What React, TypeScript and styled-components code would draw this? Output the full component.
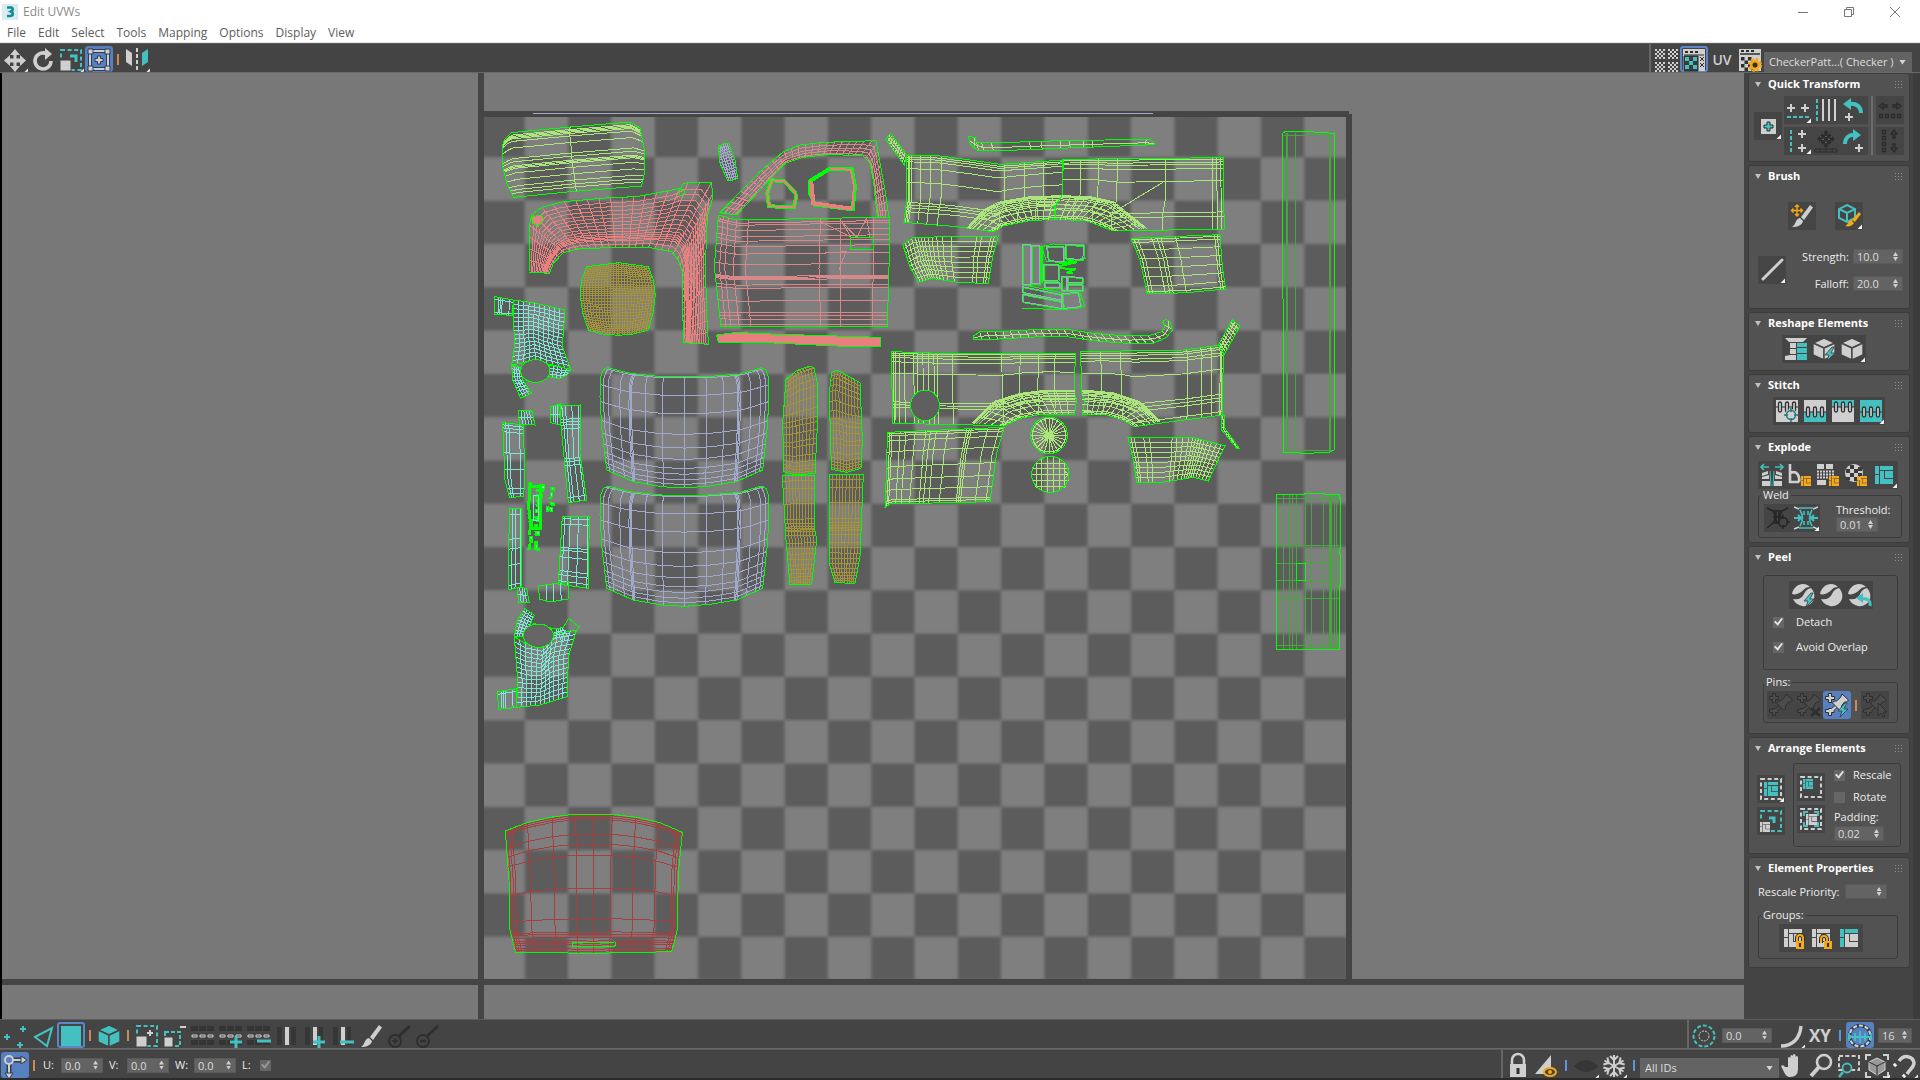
import React, { useId } from 'react';
import styled, { createGlobalStyle, css } from 'styled-components';

const W = '#cfcfcf';
const T = '#45c0c0';
const O = '#f6a915';
const K = '#2e2e2e';
const LIME = '#00ff00';

const Global = createGlobalStyle`
  *, *::before, *::after { box-sizing: border-box; }
  body { margin: 0; background: #444; }
  button, input, select { font: inherit; color: inherit; }
`;

/* ---------- shell ---------- */

const Shell = styled.div`
  display: flex;
  flex-direction: column;
  height: 100vh;
  min-width: 1100px;
  overflow: hidden;
  background: #444;
  color: #ececec;
  font: 11px/14px 'Open Sans', 'Noto Sans', sans-serif;
  border-bottom: 2px solid #2b2b2b;
`;
const TitleBar = styled.header`
  display: flex;
  align-items: center;
  gap: 5px;
  height: 23px;
  padding: 0 2px;
  background: #fff;
  color: #8a8a8a;
  font-size: 12px;
`;
const Title = styled.h1`
  flex: 1;
  margin: 0;
  font: inherit;
`;
const WindowButtons = styled.div`
  display: flex;
`;
const WindowButton = styled.button`
  width: 46px;
  height: 20px;
  padding: 0;
  border: 0;
  background: none;
  svg { display: block; margin: auto; }
`;
const MenuBar = styled.nav`
  display: flex;
  gap: 12px;
  height: 20px;
  padding: 0 7px;
  background: #fff;
  border-bottom: 1px solid #e4e4e4;
  color: #5c5c5c;
  font-size: 12px;
`;
const MenuItem = styled.button`
  padding: 0;
  border: 0;
  background: none;
  line-height: 19px;
`;
const ToolButton = styled.button<{ $plate?: boolean; $on?: boolean; $outline?: boolean }>`
  flex: none;
  width: 28px;
  height: 28px;
  padding: 0;
  border: 0;
  border-radius: ${p => (p.$plate && !p.$on ? 0 : 3)}px;
  background: ${p => (p.$on ? '#5680bf' : p.$plate ? '#454545' : 'none')};
  ${p => p.$outline && css`box-shadow: inset 0 0 0 2px #5b87c9;`}
  overflow: hidden;
  svg { display: block; }
`;
const Bar = styled.div<{ $last?: boolean }>`
  display: flex;
  align-items: stretch;
  justify-content: space-between;
  flex: none;
  height: ${p => (p.$last ? 29 : 30)}px;
  padding-top: 2px;
  border-top: 1px solid #5c5c5c;
  border-bottom: ${p => (p.$last ? 0 : 1)}px solid #686868;
  ${ToolButton} { height: 26px; }
`;
const BarGroup = styled.div<{ $edge?: boolean; $end?: number }>`
  display: flex;
  align-items: center;
  margin-top: -2px;
  padding: 2px ${p => p.$end ?? 0}px 0 1px;
  ${p => p.$edge && css`border-left: 2px solid #666;`}
`;
const Workspace = styled.main`
  display: flex;
  flex: 1;
  min-height: 0;
`;
const Viewport = styled.div`
  flex: 1;
  min-width: 0;
  background: #787878;
  border-left: 2px solid #000;
  svg { display: block; width: 100%; height: 100%; }
`;
const SidePanel = styled.aside`
  display: flex;
  flex-direction: column;
  gap: 3px;
  width: 176px;
  padding: 0 3px 0 4px;
  border-right: 7px solid #3c3c3c;
  overflow: hidden;
`;

/* ---------- controls ---------- */

const Sep = styled.span<{ $blue?: boolean }>`
  flex: none;
  width: 2px;
  height: 11px;
  margin: 0 ${p => (p.$blue ? 5 : 4)}px;
  background: ${p => (p.$blue ? '#5f94d8' : '#c98a55')};
`;
const SpinBox = styled.span<{ $w: number }>`
  display: flex;
  flex: none;
  width: ${p => p.$w}px;
  height: 15px;
  background: #636363;
  border: 1px solid #5a5a5a;
  color: #dcdcdc;
  input {
    flex: 1;
    min-width: 0;
    padding: 0 0 0 3px;
    border: 0;
    outline: 0;
    background: none;
    line-height: 13px;
  }
`;
const Steps = styled.span`
  display: flex;
  flex-direction: column;
  justify-content: center;
  gap: 1px;
  width: 9px;
`;
const Step = styled.button<{ $down?: boolean }>`
  width: 5px;
  height: 4px;
  padding: 0;
  border: 0;
  background: #d0d0d0;
  clip-path: ${p => (p.$down ? 'polygon(0 0, 100% 0, 50% 100%)' : 'polygon(50% 0, 100% 100%, 0 100%)')};
`;
const Check = styled.input`
  appearance: none;
  flex: none;
  width: 11px;
  height: 11px;
  margin: 0;
  background: #666;
  &:checked::before {
    content: '';
    display: block;
    width: 9px;
    height: 9px;
    margin: 1px;
    background: #e6e6e6;
    clip-path: polygon(0 50%, 18% 35%, 38% 60%, 82% 5%, 100% 15%, 42% 92%);
  }
  &:disabled::before { background: #999; }
`;
const SelectBox = styled.span<{ $w: number }>`
  display: grid;
  width: ${p => p.$w}px;
  height: 20px;
  align-self: flex-end;
  background: #636363;
  color: #dedede;
  select, &::after { grid-area: 1 / 1; }
  select {
    appearance: none;
    width: 100%;
    padding: 0 5px;
    border: 0;
    background: none;
    option { color: #000; }
  }
  &::after {
    content: '';
    place-self: center end;
    width: 7px;
    height: 5px;
    margin-right: 6px;
    background: #d4d4d4;
    clip-path: polygon(0 0, 100% 0, 50% 100%);
    pointer-events: none;
  }
`;
const BarField = styled.span`
  display: flex;
  align-items: center;
  gap: 6px;
  margin-right: 6px;
  label { min-width: 12px; white-space: nowrap; }
`;
const BarSpin = styled(BarField)`
  margin-left: 4px;
`;

/* ---------- rollouts ---------- */

const Card = styled.section`
  background: #525252;
  border: 1px solid #3d3d3d;
  border-radius: 3px;
`;
const CardHead = styled.button`
  display: flex;
  align-items: center;
  width: 100%;
  height: 22px;
  padding: 0 7px 2px 6px;
  border: 0;
  background: none;
  color: #fff;
  font-weight: 700;
  text-align: left;
  white-space: nowrap;
  span { flex: 1; padding-left: 7px; }
`;
const Rows = styled.div<{ $p: string; $gap?: number }>`
  display: flex;
  flex-direction: column;
  gap: ${p => p.$gap ?? 0}px;
  padding: ${p => p.$p};
`;
const Row = styled.div<{ $gap?: number; $center?: boolean }>`
  display: flex;
  align-items: center;
  gap: ${p => p.$gap ?? 0}px;
  ${p => p.$center && css`justify-content: center;`}
`;
const Divider = styled.span`
  align-self: stretch;
  width: 2px;
  margin: 0 1px;
  background: #6a6a6a;
`;
const FrameBox = styled.div<{ $p: string }>`
  flex: 1;
  padding: ${p => p.$p};
  border: 1px solid #3b3b3b;
  border-radius: 3px;
`;
const Group = styled.fieldset<{ $p: string }>`
  display: block;
  min-width: 0;
  margin: 0;
  padding: ${p => p.$p};
  border: 1px solid #3b3b3b;
  border-radius: 3px;
  legend { padding: 0 2px; line-height: 12px; margin-left: -3px; }
`;
const CheckRow = styled.div<{ $h: number; $gap: number }>`
  display: flex;
  align-items: center;
  gap: ${p => p.$gap}px;
  height: ${p => p.$h}px;
  white-space: nowrap;
`;
const Stack = styled.div<{ $gap: number; $grow?: boolean; $right?: boolean }>`
  display: flex;
  flex: ${p => (p.$grow ? '1' : 'none')};
  flex-direction: column;
  gap: ${p => p.$gap}px;
  ${p => p.$right && css`align-items: flex-end;`}
`;

/* ---------- icon art, drawn on a 28px grid ---------- */

const plus = (x: number, y: number, c = W, r = 4, w = 2) => (
  <path d={`M${x - r} ${y}h${2 * r}M${x} ${y - r}v${2 * r}`} stroke={c} strokeWidth={w} fill="none" />
);
const brush = (c = W) => (
  <g fill={c}><path d="M13 15L22 3l3 2.500L16 18z" /><path d="M12 16l3 3c-1 4-5 6-11 6 4-2 3-8 8-9z" /></g>
);
const dashBox = (c: string) => <rect x="4" y="4" width="20" height="20" fill="none" stroke={c} strokeWidth="2" strokeDasharray="4 2.600" />;
const layout = (x: number, y: number, s: number, c: string, c2 = c) => (
  <g transform={`translate(${x} ${y}) scale(${s / 18})`}>
    <path d="M0 0h4v8H0zM0 9h4v9H0zM5 0h13v4H5z" fill={c2} />
    <path d="M5 5h4v8h9v5H5zM10 5h8v7h-8z" fill={c} />
  </g>
);
const pins = (c: string) => (
  <g stroke={K} fill={c} strokeWidth="1">
    <path d="M5.500 2.500h3v3h3v3h-3v3h-3v-3h-3v-3h3z" />
    <path d="M5.500 17.500h3l7-6 1.500 2-6 6v2h-2.500v3h-3v-3h-3v-3h3z" />
    <path d="M19 3l6.500 6-2 2h-2l-3 4v3l-2 1-7-7 1.500-2h2.500l4-3.500z" />
  </g>
);
const sphere = (
  <g fill={W}><path d="M3 13C4 7 9 3 14 3c3 0 5 1 7 3-5 0-6 3-9 5s-6 3-9 2z" /><path d="M22 7c3 3 4 7 3 11-2 5-7 8-12 7-4-1-7-3-9-7 6 1 9-1 11-5s4-5 7-6z" /></g>
);
const bolt = <path d="M22 12l-7 8h4l-2 6 8-8h-4l3-6z" fill={T} stroke="#3a3a3a" strokeWidth=".8" />;
const cube = (c: string, e: string) => (
  <g fill={c} stroke={e} strokeWidth="1.400"><path d="M14 3l11 5-11 5L3 8z" /><path d="M3 8l11 5v12L3 20z" /><path d="M25 8l-11 5v12l11-5z" /></g>
);
const checks = (x: number, y: number, n: number, s: number, c: string) => (
  <path fill={c} d={Array.from({ length: n * n }, (_, i) => i).filter(i => ((i % n) + Math.floor(i / n)) % 2 === 0)
    .map(i => `M${x + (i % n) * s} ${y + Math.floor(i / n) * s}h${s}v${s}h${-s}z`).join('')} />
);
const loopRow = (c: string, y: number) => (
  <g><path fill="#343434" d="M2 4h7v5H2zM10 4h7v5h-7zM18 4h7v5h-7zM2 18h7v5H2zM10 18h7v5h-7zM18 18h7v5h-7z" />
    <path d={`M3 ${y}h5v2H3zM11 ${y}h5v2h-5zM19 ${y}h5v2h-5z`} fill="none" stroke={c} /></g>
);
const stitch = (top: string, bottom: string, y: number) => (
  <g><path d={`M3 3h22v${y - 3}H3z`} fill={top} /><path d={`M3 ${y}h22v${25 - y}H3z`} fill={bottom} />
    <path d={`M3 ${y}h22`} stroke={K} />
    {[6, 13, 20].map(x => <rect key={x} x={x - 0.5} y={y - 5} width="3" height="10" rx="1.500" fill={W} stroke={K} strokeWidth="1.300" />)}</g>
);
const miniTarget = (x: number, y: number, c: string) => (
  <g stroke={c} fill="none" strokeWidth="1.500"><circle cx={x} cy={y} r="4.500" /><path d={`M${x - 7} ${y}h4M${x + 3} ${y}h4M${x} ${y - 7}v4M${x} ${y + 3}v4`} /></g>
);
const lock = (x: number, y: number, open = false) => (
  <g><path d={open ? `M${x - 3} ${y + 2}v-4a3 3 0 0 1 6 0v3` : `M${x + 1} ${y}v-3a3 3 0 0 1 6 0v3`} fill="none" stroke={K} strokeWidth="4" />
    <path d={open ? `M${x - 3} ${y + 2}v-4a3 3 0 0 1 6 0v3` : `M${x + 1} ${y}v-3a3 3 0 0 1 6 0v3`} fill="none" stroke={O} strokeWidth="2" />
    <rect x={x} y={y} width="8" height="8" fill={O} /><path d={`M${x + 4} ${y + 2}v4`} stroke={K} strokeWidth="2" /></g>
);

const art: Record<string, React.ReactNode> = {
  move: <path fill={W} d="M14 3l5 6h-3.500v3.500H19V9l6 5.500-6 5.500v-3.500h-3.500V20H19l-5 6-5-6h3.500v-3.500H9V20l-6-5.500L9 9v3.500h3.500V9H9z" />,
  rotate: <g><path d="M18 8a8 8 0 1 0 4 7" fill="none" stroke={W} strokeWidth="3.600" /><path d="M16 2l7 6-7 6z" fill={W} /></g>,
  scale: <g>{dashBox(T)}<path d="M13 10h6v6" fill="none" stroke={T} strokeWidth="3" /><path d="M3 14h11v11H3z" fill={W} stroke="#444" /></g>,
  freeform: <g fill="none" stroke="#2e3b50"><path d="M5 5h18v18H5z" strokeWidth="4" /><path d="M5 5h18v18H5z" stroke={W} strokeWidth="2" />
    <g fill={W}><path d="M3 3h5v5H3zM20 3h5v5h-5zM3 20h5v5H3zM20 20h5v5h-5z" /></g><path d="M12.500 10h3v2.500H18v3h-2.500V18h-3v-2.500H10v-3h2.500z" fill={W} /></g>,
  mirror: <g><path d="M3 3l6 4v13l-6-4z" fill={W} /><path d="M14 2v24" stroke={W} strokeWidth="2" strokeDasharray="4 2" /><path d="M25 3l-6 4v13l6-4z" fill={T} /></g>,
  tiles: <g>{checks(3, 3, 5, 2, W)}{checks(16, 3, 5, 2, W)}{checks(3, 16, 5, 2, W)}{checks(16, 16, 5, 2, W)}</g>,
  checkWin: <g><path d="M3 3h22v22H3z" fill={W} /><path d="M4 9h20M4 25V10h14v15z" stroke={K} fill="#3b3b3b" /><path d="M5 5h3v2H5zM10 5h3v2h-3zM15 5h3v2h-3z" fill={K} />{checks(5, 11, 3, 4, T)}<path d="M20 11l4 4M24 11l-4 4M20 17l4 4M24 17l-4 4" stroke={K} /></g>,
  gearWin: <g><path d="M3 3h22v22H3z" fill={W} /><path d="M4 8h20" stroke={K} strokeWidth="1.500" /><path d="M5 4h3v2H5zM10 4h3v2h-3zM15 4h3v2h-3z" fill={K} />{checks(5, 11, 4, 3.5, K)}
    <circle cx="19" cy="19" r="5" fill={O} /><circle cx="19" cy="19" r="5.500" fill="none" stroke={O} strokeWidth="3" strokeDasharray="2.600 1.700" /><circle cx="19" cy="19" r="2.500" fill={K} /></g>,
  pivot: <g><path d="M7 7h15v15H7z" fill={W} /><path d="M13 10h3v3h3v3h-3v3h-3v-3h-3v-3h3z" fill={T} stroke={K} /></g>,
  alignH: <g>{plus(7, 12)}{plus(21, 12)}<path d="M3 21h22" stroke={T} strokeWidth="2" strokeDasharray="4 2" /></g>,
  lines: <g><path d="M5 3v23" stroke={T} strokeWidth="2" strokeDasharray="4 2" /><path d="M11 3v22M17 3v22M23 3v22" stroke={W} strokeWidth="2" /></g>,
  ccw: <g><path d="M9 8c8-1 12 3 12 9" fill="none" stroke={T} strokeWidth="4" /><path d="M11 2v12L3 8z" fill={T} />{plus(9, 21)}</g>,
  cw: <g><path d="M5 17c0-6 4-10 10-9" fill="none" stroke={T} strokeWidth="4" /><path d="M13 2v12l8-6z" fill={T} />{plus(19, 21)}</g>,
  alignV: <g>{plus(18, 7)}{plus(18, 21)}<path d="M7 3v22" stroke={T} strokeWidth="2" strokeDasharray="4 2" /></g>,
  diamond: <g><path d="M14 3l9 9-9 9-9-9z" fill="#2d2d2d" /><path d="M11 6l9 9M8 9l9 9M17 6l-9 9M20 9l-9 9" stroke="#606060" strokeDasharray="2 2" /><path d="M3 22h22v3H3zM8 22v3M14 22v3M20 22v3" fill="none" stroke="#2d2d2d" /></g>,
  spaceH: <g fill="none" stroke="#2b2b2b" strokeWidth="1.300"><path d="M3 10l4-3v2h4v2H7v2zM25 10l-4-3v2h-4v2h4v2z" /><path d="M3.500 18.500h3v3h-3zM9.500 18.500h3v3h-3zM15.500 18.500h3v3h-3zM21.500 18.500h3v3h-3z" /></g>,
  spaceV: <g fill="none" stroke="#2b2b2b" strokeWidth="1.300"><path d="M18 3l3 4h-2v4h-2V7h-2zM18 25l3-4h-2v-4h-2v4h-2z" /><path d="M6.500 3.500h3v3h-3zM6.500 9.500h3v3h-3zM6.500 15.500h3v3h-3zM6.500 21.500h3v3h-3z" /></g>,
  brushMove: <g>{brush()}<path d="M9 3v11M3.500 8.500h11M7 5l2-2 2 2M7 12l2 2 2-2M5.500 6.500l-2 2 2 2M12.500 6.500l2 2-2 2" fill="none" stroke={O} strokeWidth="1.400" /></g>,
  brushCube: <g><path d="M12 3l8 4v9l-8 4-8-4V7zM4 7l8 4 8-4M12 11v9" fill="none" stroke={T} strokeWidth="2" /><path d="M24 10l2 2-6 8-3-2zM16 18l3 3c-2 3-5 4-9 3 3-1 3-5 6-6z" fill={O} /></g>,
  falloff: <path d="M5 23L24 4" stroke={W} strokeWidth="3" strokeLinecap="round" />,
  straighten: <g fill={W}><path d="M3 3h11v4H7zM8 8h6v5H8zM8 14h6v5H8zM3 25v-4l5-1h6v5z" /><path d="M14 3h11l-4 4h-7z" /><path d="M15 8h10v4H15zM15 13h10v5H15zM15 19h10v6H15z" fill={T} /></g>,
  cubeBolt: <g>{cube(W, '#454545')}{bolt}</g>,
  cube: cube(W, '#454545'),
  stitch1: <g>{stitch(W, W, 10)}<circle cx="18" cy="18" r="6" fill={W} />{miniTarget(18, 18, '#227a80')}</g>,
  stitch2: stitch(W, T, 15),
  stitch3: stitch(T, W, 10),
  stitch4: stitch(T, T, 15),
  breakIt: <g><path d="M3 6h8M17 6h8M6 3L3 6l3 3M22 3l3 3-3 3" stroke={T} strokeWidth="1.600" fill="none" /><path d="M4 12l6-2v3l-6 2zM4 16l7-2v4H4zM4 20h8v5H4zM24 12l-6-2v3l6 2zM24 16l-7-2v4h7zM24 20h-8v5h8z" fill={W} /><path d="M12 10l1 15M16 10l-1 15" stroke={T} /></g>,
  angle: <g><path d="M4 3v18h9M4 12c7-3 10 3 9 9" fill="none" stroke={W} strokeWidth="2.600" />{layout(15, 15, 10, O)}</g>,
  smooth: <g><path d="M3 3h7v5H3zM12 3h7v5h-7zM3 19h9v5H3z" fill={W} /><path d="M3 10.500h18M3 13.500h18M3 16.500h18" stroke={W} strokeWidth="2" strokeDasharray="2 1" />{layout(15, 15, 10, O)}</g>,
  ball: <g><circle cx="12" cy="12" r="9" fill={W} /><path d="M8 4h4v4H8zM16 6h4v4h-4zM4 8h4v4H4zM12 8h4v4h-4zM8 12h4v4H8zM16 12h4v4h-4zM4 16h4v3H4zM12 16h4v4h-4z" fill="#3a3a3a" />{layout(15, 15, 10, O)}</g>,
  element: layout(5, 5, 18, T),
  weldTarget: <g stroke="#252525" fill="none" strokeWidth="1.500"><path d="M3 4l6 3h9l6-3M3 24l6-5h6M9 7c3 4 3 8 0 12M18 7c-2 3-2 5-1 7M12 7v12M15 7v12M9 13h8" />{miniTarget(19, 18, '#252525')}</g>,
  weld: <g fill="none" strokeWidth="1.600"><path d="M7 4h14M8 6c3 5 3 11 0 16M20 6c-3 5-3 11 0 16M7 24h14M12 7v4M16 7v4M12 17v4M16 17v4" stroke={T} /><path d="M2 3l5 2M26 3l-5 2M2 25l5-2M26 25l-5-2" stroke={W} /><path d="M2 14h6M26 14h-6M6 11l3 3-3 3M22 11l-3 3 3 3" stroke={T} strokeWidth="2" /></g>,
  peelBolt: <g>{sphere}{bolt}</g>,
  peel: sphere,
  peelBack: <g>{sphere}<path d="M25 25c1-6-3-8-9-7" fill="none" stroke={T} strokeWidth="3" /><path d="M18 12v10l-7-5z" fill={T} /></g>,
  pin: pins('#4c4c4c'),
  unpin: <g>{pins('#4c4c4c')}<path d="M16 17l9 8M25 17l-9 8" stroke={K} strokeWidth="2.600" /></g>,
  autopin: <g>{pins(W)}{bolt}</g>,
  selectPin: <g>{pins('#4c4c4c')}<path d="M17 12v13l3-3 2 4 2-1-2-4h4z" fill="#4c4c4c" stroke={K} /></g>,
  pack: <g>{dashBox(W)}{layout(7, 7, 14, T)}</g>,
  packTogether: <g>{dashBox(W)}{layout(6, 6, 10, T)}</g>,
  rescale: <g>{dashBox(T)}<path d="M12 11h5v5" fill="none" stroke={T} strokeWidth="3" /><path d="M2 14h12v12H2z" fill="#454545" />{layout(3, 15, 10, W)}</g>,
  packFull: <g>{dashBox(W)}<path d="M7 11V7h4M17 7h4v4M21 17v4h-4M11 21H7v-4" fill="none" stroke={T} strokeWidth="2" />{layout(9, 9, 11, W)}</g>,
  groupLock: <g>{layout(5, 5, 18, W)}{lock(17, 17)}</g>,
  groupUnlock: <g>{layout(5, 5, 18, W)}{lock(17, 17, true)}</g>,
  groupSelect: layout(5, 5, 18, W, T),
  vertex: <g>{plus(22, 7, T, 3)}{plus(6, 15, T, 3)}{plus(19, 23, T, 3)}</g>,
  edge: <path d="M6 15L23 6l-5 18z" fill="none" stroke={T} strokeWidth="2" />,
  polygon: <path d="M4 4h20v20H4z" fill={T} />,
  cubeTeal: cube(T, '#444'),
  grow: <g>{dashBox(T)}{plus(17, 11, W, 3)}<path d="M3 14h11v11H3z" fill={W} stroke="#444" /></g>,
  shrink: <g><path d="M4 10h15v14H4z" fill="none" stroke={T} strokeWidth="2" strokeDasharray="4 2" /><path d="M19 5h6" stroke={W} strokeWidth="2" /><path d="M3 15h9v10H3z" fill={W} stroke="#444" /></g>,
  loop: loopRow(W, 13),
  loopPlus: <g>{loopRow(W, 13)}{plus(19, 20, T, 6, 3)}</g>,
  loopMinus: <g>{loopRow(W, 13)}<path d="M12 19h14" stroke={T} strokeWidth="3" /></g>,
  ring: <g><path d="M4 5h5v18H4zM18 5h5v18h-5z" fill="#363636" /><path d="M12 5h4v18h-4z" fill={W} /></g>,
  ringPlus: <g><path d="M4 5h5v18H4zM18 5h4v18h-4z" fill="#363636" /><path d="M12 5h4v18h-4z" fill={W} />{plus(18, 20, T, 6, 3)}</g>,
  ringMinus: <g><path d="M4 5h5v18H4zM18 5h4v18h-4z" fill="#363636" /><path d="M12 5h4v18h-4z" fill={W} /><path d="M11 20h14" stroke={T} strokeWidth="3" /></g>,
  brush: brush(),
  brushPlus: <g><circle cx="10" cy="19" r="6" fill="none" stroke={K} strokeWidth="2" />{plus(10, 19, K, 3, 1.5)}<path d="M14 14L25 4" stroke={K} strokeWidth="3" /></g>,
  brushMinus: <g><circle cx="10" cy="19" r="6" fill="none" stroke={K} strokeWidth="2" /><path d="M7 19h6M14 14L25 4" stroke={K} strokeWidth="2.500" /></g>,
  absolute: <g fill="none" stroke="#303d50"><path d="M8 12v12M12 8h12" strokeWidth="5" /><path d="M8 12v12M12 8h10" stroke={W} strokeWidth="2" /><path d="M20 4l6 4-6 4zM4 21l4 6 4-6z" fill={W} /><circle cx="8" cy="8" r="4" stroke={W} strokeWidth="2" /></g>,
  target: <g fill="none"><circle cx="14" cy="14" r="10.500" stroke={T} strokeWidth="2" strokeDasharray="4 2" /><circle cx="14" cy="14" r="5" stroke={W} strokeDasharray="2 1" /></g>,
  curve: <path d="M3 24C15 24 22 16 23 4" fill="none" stroke={W} strokeWidth="3.400" />,
  snapGrid: <g fill="none"><circle cx="14" cy="14" r="10.500" stroke="#2e3b50" strokeWidth="3.500" /><circle cx="14" cy="14" r="10.500" stroke={W} strokeWidth="2.200" strokeDasharray="4 2" /><path d="M2 15h24M3 11v8M9 11v8M14 9v12M19 11v8M25 11v8" stroke={T} strokeWidth="1.800" /></g>,
  lock: <g><path d="M8 14V8a6 6 0 0 1 12 0v6" fill="none" stroke={W} strokeWidth="2.600" /><path d="M6 12h16v13H6z" fill={W} /><path d="M14 16v6" stroke={K} strokeWidth="3" /></g>,
  showSel: <g><path d="M19 3v13l-7 6H3z" fill={W} /><ellipse cx="18" cy="20" rx="6" ry="4" fill="#444" stroke={O} strokeWidth="2" /><circle cx="18" cy="20" r="2" fill={O} /></g>,
  eye: <path d="M2 14q12-12 24 0-12 12-24 0z" fill="#363636" />,
  snow: <g stroke={W} strokeWidth="2" fill="none">{[0, 60, 120].map(a => <path key={a} transform={`rotate(${a} 14 14)`} d="M14 3v22M10 4l4 4 4-4M10 24l4-4 4 4" />)}</g>,
  hand: <path d="M9 15V6q1-2 2.500 0v6V4q1.200-2 2.500 0v8-9q1.200-2 2.500 0v9-7q1.300-2 2.500 0v12q0 8-8 8-4 0-6-5l-3-6q2-2 4 1z" fill={W} />,
  zoom: <g fill="none" stroke={W}><circle cx="17" cy="10" r="7" strokeWidth="2.600" /><path d="M12 15l-8 9" strokeWidth="4" /></g>,
  zoomArea: <g fill="none"><path d="M4 4h20v14H4z" stroke={W} strokeWidth="2" strokeDasharray="4 2.300" /><circle cx="12" cy="16" r="4.500" stroke={T} strokeWidth="1.800" fill="#444" /><path d="M8 20l-4 5" stroke={T} strokeWidth="2.600" /></g>,
  extents: <g><path d="M3 8V3h5M20 3h5v5M25 20v5h-5M8 25H3v-5" fill="none" stroke={W} strokeWidth="2" /><path d="M14 6l8 4v8l-8 5-8-5v-8z" fill="#999" stroke={W} /><path d="M6 10l8 4 8-4M14 14v9" fill="none" stroke={K} /></g>,
  magnet: <g fill="none" stroke={W} strokeWidth="3.500"><path d="M8 9c5-7 14-5 15 2 0 4-3 5-7 11" /><path d="M3 14l2-2M12 25l2-2" stroke="#eee" /></g>,
};

function Icon({ name, fly }: { name: string; fly?: boolean }) {
  return (
    <svg width="28" height="28" viewBox="0 0 28 28" aria-hidden="true">
      {art[name]}
      {fly && <path d="M27 22.500v4.500h-4.500z" fill="#f2f2f2" />}
    </svg>
  );
}
type ToolProps = { icon: string; fly?: boolean; plate?: boolean; on?: boolean; outline?: boolean };
function Tool({ icon, fly, plate, on, outline }: ToolProps) {
  return (
    <ToolButton type="button" aria-label={icon} $plate={plate} $on={on} $outline={outline}>
      <Icon name={icon} fly={fly} />
    </ToolButton>
  );
}
const Tools = ({ of, fly = [], plate }: { of: string[]; fly?: string[]; plate?: boolean }) => (
  <>{of.map(n => <Tool key={n} icon={n} fly={fly.includes(n)} plate={plate} />)}</>
);

function Spin({ id, value, w, label }: { id?: string; value: string; w: number; label?: string }) {
  return (
    <SpinBox $w={w}>
      <input id={id} type="text" defaultValue={value} aria-label={label} />
      <Steps>
        <Step type="button" aria-label="Increase" />
        <Step type="button" aria-label="Decrease" $down />
      </Steps>
    </SpinBox>
  );
}
function Labeled({ text, value, w }: { text: string; value: string; w: number }) {
  const id = useId();
  return <><label htmlFor={id}>{text}</label><Spin id={id} value={value} w={w} /></>;
}
function Tick({ text, on, h, gap }: { text: string; on?: boolean; h: number; gap: number }) {
  const id = useId();
  return (
    <CheckRow $h={h} $gap={gap}>
      <Check id={id} type="checkbox" defaultChecked={on} />
      <label htmlFor={id}>{text}</label>
    </CheckRow>
  );
}
function Rollout({ title, children }: { title: string; children: React.ReactNode }) {
  return (
    <Card>
      <CardHead type="button" aria-expanded="true">
        <svg width="6" height="5" viewBox="0 0 6 5" aria-hidden="true"><path d="M0 0h6L3 5z" fill="#c0c0c0" /></svg>
        <span>{title}</span>
        <svg width="7" height="7" viewBox="0 0 7 7" aria-hidden="true"><path d="M.5 0v7M3.500 0v7M6.500 0v7" stroke="#8f8f8f" strokeDasharray="1 2" /></svg>
      </CardHead>
      {children}
    </Card>
  );
}

/* ---------- UV shells ---------- */

type Pt = [number, number];
const parse = (s: string): Pt[] => s.split(' ').map(p => p.split(',').map(Number) as Pt);
const at = (line: Pt[], t: number): Pt => {
  const seg = line.slice(1).map((p, i) => Math.hypot(p[0] - line[i][0], p[1] - line[i][1]));
  let d = t * seg.reduce((a, b) => a + b, 0);
  for (let i = 0; i < seg.length; i++) {
    if (d <= seg[i] || i === seg.length - 1) {
      const k = seg[i] ? Math.min(1, d / seg[i]) : 0;
      return [line[i][0] + (line[i + 1][0] - line[i][0]) * k, line[i][1] + (line[i + 1][1] - line[i][1]) * k];
    }
    d -= seg[i];
  }
  return line[0];
};
const even = (n: number, a = 0, b = 1) => Array.from({ length: n }, (_, i) => a + ((b - a) * (i + 1)) / (n + 1));
const toPath = (pts: Pt[], closed = false) => 'M' + pts.map(p => `${p[0].toFixed(1)} ${p[1].toFixed(1)}`).join('L') + (closed ? 'Z' : '');

type PatchProps = { t: string; b: string; l?: string; r?: string; u: number | number[]; v: number | number[]; c: string; bare?: boolean };
/* A patch is spanned between its four edges; u and v place the wire lines. */
function Patch({ t, b, l, r, u, v, c, bare }: PatchProps) {
  const top = parse(t), bot = parse(b);
  const left = l ? parse(l) : [top[0], bot[0]];
  const right = r ? parse(r) : [top[top.length - 1], bot[bot.length - 1]];
  const A = top[0], B = top[top.length - 1], C = bot[0], D = bot[bot.length - 1];
  const pos = (x: number, y: number): Pt => {
    const pt = at(top, x), pb = at(bot, x), pl = at(left, y), pr = at(right, y);
    return [0, 1].map(k => (1 - y) * pt[k] + y * pb[k] + (1 - x) * pl[k] + x * pr[k]
      - ((1 - x) * (1 - y) * A[k] + x * (1 - y) * B[k] + (1 - x) * y * C[k] + x * y * D[k])) as Pt;
  };
  const us = typeof u === 'number' ? even(u) : u;
  const vs = typeof v === 'number' ? even(v) : v;
  const steps = Array.from({ length: 25 }, (_, i) => i / 24);
  const wires = us.map(x => toPath(steps.map(y => pos(x, y)))).join('') + vs.map(y => toPath(steps.map(x => pos(x, y)))).join('');
  return (
    <>
      <path d={wires} stroke={c} />
      {!bare && <path d={toPath([...top, ...right, ...[...bot].reverse(), ...[...left].reverse()], true)} stroke={LIME} />}
    </>
  );
}
const Shape = ({ p, fill, c = LIME, w = 1, open }: { p: string; fill?: string; c?: string; w?: number; open?: boolean }) => (
  <path d={toPath(parse(p), !open)} fill={fill ?? 'none'} stroke={c} strokeWidth={w} />
);
const Sheet = ({ x, y, children }: { x: number; y: number; children: React.ReactNode }) => (
  <g transform={`translate(${x} ${y}) scale(${1 / 3})`}>{children}</g>
);
const Wires = styled.g`
  fill: none;
  shape-rendering: crispEdges;
  path, ellipse { vector-effect: non-scaling-stroke; }
`;

const PINK = '#e88080', DOOR = '#d88888', GREEN = '#aae67a', GOLD = '#a5933c', CYAN = '#80e6d4', BLUE = '#a0a9cb', RED = '#a83e3e', FOREST = '#44a83c';
const hoodU = [0.02, 0.05, 0.12, 0.175, 0.183, 0.19, 0.27, 0.37, 0.5, 0.63, 0.73, 0.81, 0.818, 0.826, 0.89, 0.95, 0.98];
const hoodV = [0.02, 0.19, 0.35, 0.53, 0.65, 0.75, 0.83, 0.88, 0.93, 0.97];
const archV = [0, 0.04, 0.08, 0.14, 0.22, 0.38, 0.6, 0.85, 0.93];
const stripV = [0.05, 0.12, 0.26, 0.4, 0.44, 0.47, 0.485, 0.5, 0.515, 0.55, 0.62, 0.67, 0.72, 0.77, 0.82, 0.86, 0.9, 0.93, 0.96, 0.98];
const upperStripV = [0.04, 0.08, 0.14, 0.2, 0.3, 0.4, 0.48, 0.53, 0.6, 0.68, 0.73, 0.82, 0.88, 0.92, 0.95, 0.98];

function Hood() {
  return <Patch c={BLUE} u={hoodU} v={hoodV} t="383,263 450,280 545,290 680,290 780,282 845,263" b="380,570 460,605 545,620 613,624 690,618 770,605 848,570"
    l="383,263 370,270 362,290 360,350 365,440 380,570" r="845,263 858,270 865,290 867,350 862,440 848,570" />;
}
const crumbs = Array.from({ length: 34 }, (_, i) => {
  const y = 608 + ((i * 37) % 200);
  const x = y < 690 ? 150 + ((i * 29) % 72) : 148 + ((i * 17) % 34);
  return `M${x} ${y}h${4 + (i % 4) * 3}v${4 + (i % 3) * 4}h-7z`;
}).join('');
const spokes = Array.from({ length: 24 }, (_, i) => {
  const a = (i * Math.PI) / 12;
  return `M567 1006L${(567 + 54 * Math.cos(a)).toFixed(1)} ${(1006 + 54 * Math.sin(a)).toFixed(1)}`;
}).join('');

function UVCanvas() {
  return (
    <svg viewBox="2 73 1742 946" preserveAspectRatio="xMidYMid slice" role="img" aria-label="UV layout">
      <defs>
        <pattern id="checker" x="481.500" y="114" width="86.600" height="86.600" patternUnits="userSpaceOnUse">
          <rect width="86.600" height="86.600" fill="#7f7f7f" />
          <path d="M0 0h43.300v43.300H0zM43.300 43.300h43.300v43.300H43.300z" fill="#5c5c5c" />
        </pattern>
        <filter id="soft" x="0" y="0" width="1" height="1"><feGaussianBlur stdDeviation="1.700" /></filter>
      </defs>
      <rect x="481" y="114" width="868" height="868" fill="url(#checker)" filter="url(#soft)" />
      <g fill="#454545" shapeRendering="crispEdges">
        <path d="M478 73h6v946h-6zM0 979h1744v6H0zM478 111h871v6H478zM1346 114h6v865h-6z" />
        <path d="M533 113h620v1H533z" fill="#a0a9cb" />
      </g>
      <Wires>
        <Sheet x={470} y={100}>
          <Patch c={GREEN} u={[0.49]} v={[0.04, 0.06, 0.08, 0.1, 0.14, 0.24, 0.4, 0.45, 0.51, 0.53, 0.55, 0.62, 0.72, 0.82, 0.88, 0.93]}
            t="103,120 124,98 300,81 482,66 510,84" r="510,84 523,150 524,215 515,258" b="131,292 300,275 515,258" l="103,120 97,140 99,205 112,255 131,292" />
          <Patch c={PINK} u={34} v={[0.1, 0.18, 0.26, 0.34, 0.41, 0.48, 0.55, 0.62, 0.68, 0.73, 0.77, 0.8, 0.83, 0.86, 0.93]}
            t="177,516 180,370 185,345 215,322 280,305 420,293 500,290 580,275 632,265 640,250 665,247 724,248 729,290 712,350 706,500 712,690 716,733"
            b="238,520 250,490 280,458 330,446 420,443 540,443 605,455 625,480 637,515 640,728" />
          <Shape p="185,350 215,345 222,360 205,378 187,370" fill={PINK} />
          <ellipse cx="635" cy="277" rx="8" ry="10" stroke={LIME} />
          <Patch c={DOOR} u={[0.03, 0.06, 0.11, 0.18, 0.6, 0.72, 0.91]} v={[0.03, 0.05, 0.1, 0.16, 0.2, 0.25, 0.32, 0.42, 0.53, 0.54, 0.55, 0.56, 0.61, 0.64, 0.76, 0.87, 0.9, 0.93, 0.98]}
            t="745,345 800,360 1222,352 1257,352" b="753,680 1252,680" l="745,345 733,500 753,680" r="1257,352 1257,500 1252,680" />
          <Patch c={DOOR} u={34} v={[0.25, 0.5, 0.7, 0.9]} t="750,338 870,215 940,155 990,135 1060,127 1218,122 1245,270 1257,352" b="800,345 870,270 945,190 1000,172 1080,163 1180,168 1200,190 1210,240 1222,352" />
          <Shape c={DOOR} open p="1050,365 1142,410 1115,365 1160,412 1190,355 1200,412" />
          <Shape c={DOOR} open p="1050,460 1128,455 1110,500 1110,680" />
          <Shape p="1142,412 1211,412 1211,449 1142,449" />
          <Shape p="905,241 942,243 975,277 979,290 972,321 897,319 892,280" c={LIME} w={4} />
          <Shape p="905,241 942,243 975,277 979,290 972,321 897,319 892,280" c={PINK} w={2} />
          <Shape p="1020,243 1080,206 1145,207 1155,260 1148,328 1035,314 1020,280" w={4} />
          <Shape p="1080,207 1143,209 1152,260 1147,325 1035,313 1022,280 1024,243" c={PINK} w={2} open />
          <Shape p="1024,245 1030,310 1145,326" c={PINK} w={4} open />
          <Shape p="740,705 800,697 870,701 1230,712 1232,738 1100,738 870,727 745,727" fill={PINK} />
          <Patch c={BLUE} u={5} v={12} t="745,140 760,132 776,130" b="772,240 785,241 803,236" r="776,130 795,180 803,236" l="745,140 750,190 772,240" />
          <Patch c={GOLD} u={24} v={[0.03, 0.06, 0.09, 0.12, 0.15, 0.18, 0.22, 0.26, 0.3, 0.33, 0.36, 0.39, 0.42, 0.45, 0.49, 0.53, 0.57, 0.61, 0.65, 0.69, 0.73, 0.77, 0.81, 0.85, 0.88, 0.91, 0.94, 0.97]}
            t="350,500 445,488 535,500" b="356,692 400,702 445,706 490,702 535,690" l="350,500 335,540 330,580 338,640 356,692" r="535,500 550,540 556,585 549,640 535,690" />
        </Sheet>
        <Sheet x={480} y={280}>
          <Patch c={CYAN} u={[0.2, 0.3, 0.4, 0.8]} v={[0.15, 0.9]} t="45,50 100,60" b="43,103 97,106" />
          <Patch c={CYAN} u={9} v={14} t="100,60 160,68 255,90" b="95,255 122,250 165,238 205,252 272,268" l="100,60 103,200 95,255" r="255,90 247,200 272,268" />
          <Patch c={CYAN} u={3} v={8} t="95,255 122,262" b="122,355 155,340" l="95,255 98,300 122,355" r="122,262 128,300 155,340" />
          <Patch c={CYAN} u={4} v={3} t="208,255 272,268" b="205,290 240,296 262,285" />
          <Patch c={CYAN} u={[0.15, 0.3, 0.8]} v={[0.03, 0.07, 0.12, 0.4, 0.62, 0.88, 0.95]} t="68,428 130,435" b="88,652 130,650" l="68,428 75,600 88,652" r="130,435 135,600 130,650" />
          <Patch c={CYAN} u={4} v={1} t="115,390 155,390" b="118,432 165,435" />
          <Patch c={CYAN} u={[0.15, 0.3, 0.6, 0.9]} v={[0.14, 0.17, 0.2, 0.24, 0.55, 0.58, 0.62, 0.95]} t="235,378 302,375" b="265,668 320,660" l="235,378 243,435 265,668" r="302,375 300,520 320,660" />
          <Patch c={CYAN} u={3} v={1} t="213,380 240,372" b="212,428 240,435" />
          <Patch c={CYAN} u={[0.25, 0.5, 0.9]} v={[0.08, 0.38, 0.5, 0.7, 0.95]} t="88,685 125,685" b="85,930 125,920" />
          <Patch c={CYAN} u={3} v={1} t="112,922 140,925" b="115,966 148,968" />
          <Patch c={CYAN} u={[0.1, 0.3, 0.6, 0.95]} v={[0.04, 0.12, 0.46, 0.5, 0.6, 0.8, 0.86, 0.95]} t="247,708 328,710" b="235,912 325,925" />
          <Patch c={CYAN} u={3} v={[]} t="176,918 265,905" b="178,957 210,966 265,957" />
          <Patch c={CYAN} u={[0.2, 0.3, 0.4, 0.8]} v={[0.15]} t="53,1235 110,1226" b="55,1288 110,1282" />
          <Patch c={CYAN} u={10} v={13} t="103,1070 135,1090 190,1102 225,1060 290,1050" b="110,1282 180,1275 262,1250" l="103,1070 113,1200 110,1282" r="290,1050 265,1130 262,1250" />
          <Patch c={CYAN} u={3} v={8} t="135,985 163,1005" b="103,1070 132,1070" l="135,985 112,1020 103,1070" r="163,1005 150,1035 132,1070" />
          <Shape p="160,1030 222,1046 250,1043 265,1015 297,1040 285,1060" open />
          <Patch c={CYAN} u={4} v={3} t="222,1048 252,1043" b="218,1085 280,1075" bare />
          <ellipse cx="175" cy="1067" rx="45" ry="35" stroke={LIME} fill="#666" />
          <ellipse cx="166" cy="273" rx="44" ry="34" stroke={LIME} fill="#666" />
          <path d={crumbs} fill={CYAN} stroke={LIME} strokeWidth="1.500" />
          <Shape p="150,620 180,620 182,745 153,745 146,680" w={3} />
          <Shape p="160,645 174,645 174,720 160,720" c={CYAN} />
          <Hood />
          <g transform="translate(0 355)"><Hood /></g>
          <Patch c={GOLD} u={9} v={upperStripV} t="918,298 950,272 990,258" b="912,575 945,585 1005,580" l="918,298 908,430 912,575" r="990,258 1002,264 1012,310 1012,440 1005,580" />
          <Patch c={GOLD} u={9} v={upperStripV} t="1055,278 1072,270 1140,308" b="1055,568 1100,577 1143,565" l="1055,278 1048,340 1052,500 1055,568" r="1140,308 1147,480 1143,565" />
          <Patch c={GOLD} u={9} v={stripV} t="907,587 1005,585" b="930,915 995,912" l="907,587 918,780 930,915" r="1005,585 1003,740 1010,780 995,912" />
          <Patch c={GOLD} u={9} v={stripV} t="1048,583 1150,583" b="1065,908 1125,910" l="1048,583 1048,850 1065,908" r="1150,583 1140,830 1125,910" />
        </Sheet>
        <Sheet x={860} y={100}>
          <Patch c={GREEN} u={[0.03, 0.06, 0.09, 0.14, 0.34, 0.4, 0.5, 0.55, 0.62, 0.67, 0.95]} v={[0.6]} t="325,110 345,112 350,128 420,128 600,122 870,118 883,130" b="330,130 350,150 420,152 600,145 883,134" />
          <Patch c={GREEN} u={2} v={9} t="77,118 92,100" b="133,195 140,165" />
          <Patch c={GREEN} u={[0.01, 0.02, 0.03, 0.09, 0.15, 0.22, 0.63, 0.76, 0.88]} v={[0.03, 0.06, 0.1, 0.2, 0.4, 0.7, 0.74, 0.78, 0.84]}
            t="140,165 240,168 330,180 420,193 500,188 607,180" b="132,367 290,380 400,395 430,378 510,362 582,358" l="140,165 140,300 132,367" r="607,180 607,285 582,320 582,358" />
          <Patch c={GREEN} bare u={11} v={archV} t="320,385 370,330 420,305 510,290 607,287" b="400,395 430,378 510,362 582,358" />
          <Patch c={GREEN} u={[0.11, 0.22, 0.34, 0.64, 0.93, 0.96, 0.985]} v={[0.02, 0.06, 0.09, 0.15, 0.32, 0.76, 0.82]}
            t="610,178 1090,173" b="585,358 680,362 760,393 1093,387" l="610,178 607,285 585,320 585,358" r="1090,173 1090,250 1093,387" />
          <Patch c={GREEN} bare u={11} v={archV} t="607,287 690,290 760,305 860,385" b="585,358 660,360 720,375 760,393" />
          <Shape c={GREEN} p="915,243 780,325" open />
          <Patch c={GREEN} u={[0.03, 0.07, 0.11, 0.15, 0.18, 0.21, 0.24, 0.28, 0.32, 0.37, 0.43, 0.52, 0.78, 0.83, 0.93, 0.96]} v={8} t="128,433 160,412 415,408" b="175,547 215,535 300,548 385,550" l="128,433 150,500 175,547" r="415,408 398,470 385,550" />
          <Patch c={GREEN} u={[0.03, 0.07, 0.23, 0.29, 0.33, 0.5, 0.94, 0.97]} v={[0.03, 0.08, 0.22, 0.38, 0.54, 0.7, 0.86, 0.96]} t="813,415 1080,404" b="862,582 980,578 1097,567" l="813,415 840,480 862,582" r="1080,404 1087,500 1097,567" />
          <Shape p="543,440 543,550" w={4} open />
          <Shape p="545,440 580,432 672,435 675,475 615,484 560,486" w={1} />
          <Shape p="598,488 650,487 603,497 603,505 648,507 620,518 640,520" w={2} open />
          <Shape p="485,626 610,628 675,620 660,578" w={1} open />
          <Shape p="487,554 604,578 604,628" w={1} open />
          {['487,434 510,434 510,553 487,553', '513,436 537,436 537,550 513,550', '560,440 610,440 612,485 565,482', '617,434 672,436 668,478 617,476', '550,492 594,492 594,540 552,542',
            '553,546 597,546 597,562 553,562', '604,528 620,528 620,572 604,572', '622,530 668,532 668,548 622,548', '622,553 668,553 668,570 622,570', '487,560 604,584 604,600 487,577',
            '487,582 604,605 604,625 487,605', '607,580 655,578 662,620 610,625'].map(p => <g key={p}><g transform="translate(3 3)"><Shape p={p} /></g><Shape p={p} c={BLUE} /></g>)}
          <Patch c={GREEN} u={26} v={[0.55]} t="340,708 360,695 450,693 540,688 620,688 700,700 800,708 870,706 905,695 915,680 908,665 918,658" b="342,720 400,718 540,710 620,710 700,722 800,730 880,730 920,712 937,690 930,665" />
          <Patch c={GREEN} u={[0.01, 0.02, 0.04, 0.07, 0.12, 0.14, 0.17, 0.2, 0.23, 0.25, 0.33, 0.6, 0.7, 0.8, 0.89]} v={[0.02, 0.05, 0.08, 0.14, 0.3, 0.7, 0.74, 0.78]}
            t="95,755 240,760 646,761" b="97,970 435,977 480,955 540,943 643,943" r="646,761 643,880 650,900 643,943" />
          <Patch c={GREEN} bare u={11} v={archV} t="335,970 400,905 480,880 560,870 646,870" b="435,977 480,955 540,943 643,943" />
          <ellipse cx="195" cy="916" rx="43" ry="46" stroke={LIME} fill="#5f5f5f" />
          <Patch c={GREEN} u={[0.14, 0.28, 0.75, 0.85, 0.92, 0.98, 0.99]} v={[0.03, 0.06, 0.11, 0.15, 0.34, 0.7, 0.75, 0.8, 0.95]}
            t="662,755 970,750 1085,735" b="668,943 740,945 790,960 822,980 1087,945" l="662,755 665,880 674,900 668,943" r="1085,735 1090,760 1087,945" />
          <Patch c={GREEN} bare u={11} v={archV} t="665,870 760,878 840,905 900,965" b="668,943 740,945 790,960 822,980" />
          <Patch c={GREEN} u={2} v={9} t="1117,660 1140,678" b="1075,735 1092,765" />
          <Patch c={GREEN} u={1} v={8} t="1085,945 1092,945" b="1130,1045 1138,1045" l="1085,945 1085,990 1130,1045" r="1092,945 1095,985 1138,1045" />
          <Patch c={GREEN} u={[0.02, 0.04, 0.11, 0.16, 0.24, 0.33, 0.37, 0.42, 0.52, 0.68, 0.7, 0.72, 0.86, 0.96]} v={[0.02, 0.05, 0.12, 0.27, 0.48, 0.65, 0.8, 0.94, 0.97]} t="82,997 240,990 433,982" b="75,1222 90,1212 390,1205" l="82,997 80,1100 75,1222" r="433,982 410,1060 390,1205" />
          <path d={spokes} stroke={GREEN} /><ellipse cx="567" cy="1006" rx="50" ry="50" stroke={GREEN} /><ellipse cx="567" cy="1006" rx="55" ry="55" stroke={LIME} />
          <path stroke={GREEN} d="M530 1085v80M545 1075v98M562 1070v108M580 1070v108M598 1075v98M612 1085v80M525 1090h92M518 1106h108M516 1122h112M518 1140h108M525 1158h92M612 1112l14 12-14 12" />
          <ellipse cx="571" cy="1123" rx="56" ry="54" stroke={LIME} />
          <Patch c={GREEN} u={[0.03, 0.06, 0.16, 0.22, 0.45, 0.5, 0.56, 0.62, 0.66, 0.69, 0.72, 0.75, 0.78, 0.82, 0.86, 0.91, 0.96]} v={8} t="804,1013 1000,1013 1095,1037" b="830,1148 900,1148 1000,1132 1045,1143" l="804,1013 820,1080 830,1148" />
          <path stroke={FOREST} d="M1278 100V1055M1281 100V1055M1306 100V1055M1408 100V1055M1411 100V1055M1272 106H1420M1272 1050H1420" />
          <Shape p="1268,100 1275,95 1345,95 1423,100 1423,1050 1410,1056 1345,1060 1270,1057" />
        </Sheet>
        <path stroke={FOREST} d="M1283.500 495v154M1289.500 495v154M1292.500 495v154M1296.500 495v154M1305.500 495v154M1311.500 495v154M1323.500 495v154M1329.500 495v154M1330.500 495v154M1331.500 495v154M1334.500 495v154M1336.500 495v154M1277 498.500h62M1277 545.500h62M1277 563.500h62M1277 580.500h62M1277 598.500h62M1277 645.500h62" />
        <path stroke={LIME} d="M1276.500 494.500h28v-1h20v1h15v4h1v50h-1v5h1v32h-1v64h-63zM1296.500 563.500h9v17h-9z" />
        <Sheet x={470} y={780}>
          <Patch c={RED} u={[0.01, 0.025, 0.04, 0.13, 0.27, 0.4, 0.5, 0.6, 0.73, 0.86, 0.96, 0.975, 0.99]} v={[0.01, 0.025, 0.04, 0.144, 0.216, 0.295, 0.53, 0.75, 0.845, 0.86, 0.885, 0.91, 0.925, 0.94, 0.97, 0.985]}
            t="106,153 170,128 240,112 310,103 430,103 500,112 570,128 637,157" b="137,517 370,520 605,515" l="106,153 117,300 120,450 137,517" r="637,157 625,280 622,450 605,515" />
          <Shape p="307,488 435,486 437,496 430,500 307,500" />
        </Sheet>
      </Wires>
    </svg>
  );
}

/* ---------- text glyph buttons ---------- */

const GlyphButton = styled.button<{ $small?: boolean }>`
  width: 28px;
  height: 26px;
  padding: 0;
  border: 0;
  background: none;
  color: ${W};
  font: ${p => (p.$small ? '600 14px' : '700 17px')} 'Open Sans', 'Noto Sans', sans-serif;
  text-align: center;
`;

const menus = ['File', 'Edit', 'Select', 'Tools', 'Mapping', 'Options', 'Display', 'View'];

export default function App() {
  return (
    <Shell>
      <Global />
      <TitleBar>
        <svg width="16" height="16" viewBox="0 0 16 16" aria-hidden="true"><path d="M0 0h16v16H0z" fill="#d7ecee" /><path d="M5 3.500h4.500c2 1 1.500 3-.5 4 2.500 1 2.500 4-.5 4.500H5" fill="none" stroke="#148a92" strokeWidth="2.600" /></svg>
        <Title>Edit UVWs</Title>
        <WindowButtons>
          <WindowButton type="button" aria-label="Minimize"><svg width="10" height="10"><path d="M0 5.500h10" stroke="#777" /></svg></WindowButton>
          <WindowButton type="button" aria-label="Restore"><svg width="10" height="10" fill="none" stroke="#777"><path d="M.5 2.500h7v7h-7zM2.500 2.500v-2h7v7h-2" /></svg></WindowButton>
          <WindowButton type="button" aria-label="Close"><svg width="10" height="10"><path d="M0 0l10 10M10 0L0 10" stroke="#777" /></svg></WindowButton>
        </WindowButtons>
      </TitleBar>
      <MenuBar>{menus.map(m => <MenuItem key={m} type="button">{m}</MenuItem>)}</MenuBar>
      <Bar>
        <BarGroup>
          <Tools of={['move', 'rotate', 'scale']} fly={['move', 'scale']} />
          <Tool icon="freeform" on />
          <Sep />
          <Tool icon="mirror" fly />
        </BarGroup>
        <BarGroup $edge $end={8}>
          <Tool icon="tiles" />
          <Tool icon="checkWin" outline />
          <GlyphButton $small type="button">UV</GlyphButton>
          <Tool icon="gearWin" />
          <SelectBox $w={148}><select aria-label="Background map"><option>CheckerPatt...( Checker )</option></select></SelectBox>
        </BarGroup>
      </Bar>
      <Workspace>
        <Viewport><UVCanvas /></Viewport>
        <SidePanel>
          <Rollout title="Quick Transform">
            <Rows $p="0 5px 6px">
              <Row $gap={2}>
                <Tool icon="pivot" fly plate />
                <Stack $gap={3}>
                  <Row><Tools plate of={['alignH', 'lines', 'ccw']} fly={['alignH']} /></Row>
                  <Row><Tools plate of={['alignV', 'diamond', 'cw']} fly={['alignV']} /></Row>
                </Stack>
                <Divider />
                <Stack $gap={3}><Tool icon="spaceH" plate /><Tool icon="spaceV" plate /></Stack>
              </Row>
            </Rows>
          </Rollout>
          <Rollout title="Brush">
            <Rows $p="14px 18px 0 11px"><Row $gap={19} $center><Tool icon="brushMove" plate /><Tool icon="brushCube" fly plate /></Row></Rows>
            <Rows $p="19px 6px 17px 9px">
              <Row>
                <Tool icon="falloff" fly plate />
                <Stack $grow $gap={12} $right>
                  <Row $gap={4}><Labeled text="Strength:" value="10.0" w={50} /></Row>
                  <Row $gap={4}><Labeled text="Falloff:" value="20.0" w={50} /></Row>
                </Stack>
              </Row>
            </Rows>
          </Rollout>
          <Rollout title="Reshape Elements">
            <Rows $p="0 12px 7px 33px"><Row><Tools plate of={['straighten', 'cubeBolt', 'cube']} fly={['cube']} /></Row></Rows>
          </Rollout>
          <Rollout title="Stitch">
            <Rows $p="0 12px 7px 24px"><Row><Tools plate of={['stitch1', 'stitch2', 'stitch3', 'stitch4']} fly={['stitch4']} /></Row></Rows>
          </Rollout>
          <Rollout title="Explode">
            <Rows $p="2px 7px 4px 9px">
              <Row><Tools plate of={['breakIt', 'angle', 'smooth', 'ball', 'element']} fly={['element']} /></Row>
              <Group $p="2px 5px 5px">
                <legend>Weld</legend>
                <Row $gap={16}>
                  <Row><Tools plate of={['weldTarget', 'weld']} fly={['weld']} /></Row>
                  <Stack $gap={0}><Labeled text="Threshold:" value="0.01" w={42} /></Stack>
                </Row>
              </Group>
            </Rows>
          </Rollout>
          <Rollout title="Peel">
            <Rows $p="6px 11px 10px 14px" $gap={6}>
              <FrameBox $p="5px 9px 10px">
                <Row $center><Tools plate of={['peelBolt', 'peel', 'peelBack']} /></Row>
                <Tick text="Detach" on h={26} gap={12} />
                <Tick text="Avoid Overlap" on h={24} gap={12} />
              </FrameBox>
              <Group $p="3px">
                <legend>Pins:</legend>
                <Row><Tools plate of={['pin', 'unpin']} /><Tool icon="autopin" on /><Sep /><Tool icon="selectPin" plate /></Row>
              </Group>
            </Rows>
          </Rollout>
          <Rollout title="Arrange Elements">
            <Rows $p="3px 8px 6px 8px">
              <Row $gap={8}>
                <Stack $gap={4}><Tool icon="pack" fly plate /><Tool icon="rescale" plate /></Stack>
                <FrameBox $p="0 3px 5px">
                  <Row $gap={9}>
                    <Stack $gap={4}><Tool icon="packTogether" plate /><Tool icon="packFull" plate /></Stack>
                    <Stack $gap={0}>
                      <Tick text="Rescale" on h={22} gap={8} />
                      <Tick text="Rotate" h={22} gap={8} />
                      <Rows $p="2px 0 0" $gap={2}><Labeled text="Padding:" value="0.02" w={50} /></Rows>
                    </Stack>
                  </Row>
                </FrameBox>
              </Row>
            </Rows>
          </Rollout>
          <Rollout title="Element Properties">
            <Rows $p="4px 11px 8px 9px" $gap={10}>
              <Row $gap={5}><Labeled text="Rescale Priority:" value="" w={42} /></Row>
              <Group $p="3px 5px 6px">
                <legend>Groups:</legend>
                <Rows $p="0 0 0 15px"><Row><Tools plate of={['groupLock', 'groupUnlock', 'groupSelect']} /></Row></Rows>
              </Group>
            </Rows>
          </Rollout>
        </SidePanel>
      </Workspace>
      <Bar>
        <BarGroup>
          <Tools of={['vertex', 'edge']} />
          <Tool icon="polygon" outline />
          <Sep /><Tool icon="cubeTeal" /><Sep />
          <Tools of={['grow', 'shrink', 'loop', 'loopPlus', 'loopMinus', 'ring', 'ringPlus', 'ringMinus', 'brush', 'brushPlus', 'brushMinus']} />
        </BarGroup>
        <BarGroup $edge $end={2}>
          <Tool icon="target" />
          <BarSpin><Spin value="0.0" w={50} label="Soft selection falloff" /></BarSpin>
          <Tool icon="curve" fly />
          <GlyphButton type="button">XY</GlyphButton>
          <Sep $blue />
          <Tool icon="snapGrid" on />
          <BarSpin><Spin value="16" w={34} label="Grid" /></BarSpin>
        </BarGroup>
      </Bar>
      <Bar $last>
        <BarGroup>
          <Tool icon="absolute" on />
          <Sep />
          <BarSpin><Labeled text="U:" value="0.0" w={42} /></BarSpin>
          <BarField><Labeled text="V:" value="0.0" w={42} /></BarField>
          <BarField><Labeled text="W:" value="0.0" w={42} /></BarField>
          <BarField><label htmlFor="lock-l">L:</label><Check id="lock-l" type="checkbox" defaultChecked disabled /></BarField>
        </BarGroup>
        <BarGroup $edge $end={1}>
          <Tools of={['lock', 'showSel']} />
          <Sep $blue />
          <Tools of={['eye', 'snow']} fly={['eye', 'snow']} />
          <Sep $blue />
          <SelectBox $w={139}><select aria-label="Material IDs"><option>All IDs</option></select></SelectBox>
          <Tools of={['hand', 'zoom', 'zoomArea', 'extents', 'magnet']} fly={['extents', 'magnet']} />
        </BarGroup>
      </Bar>
    </Shell>
  );
}
